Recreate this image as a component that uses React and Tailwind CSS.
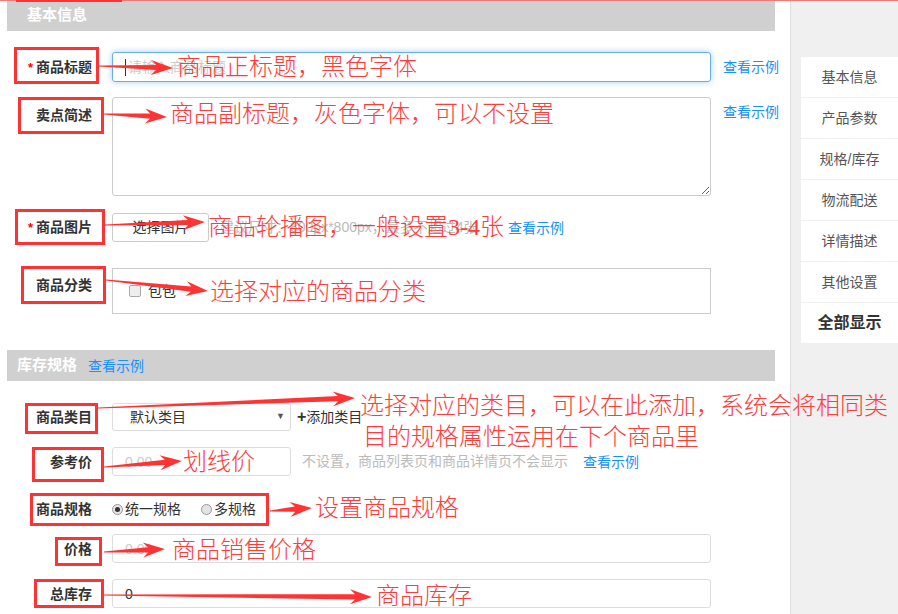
import React from 'react';

// 红框标注
const marks = [
  { l: 14, t: 47, w: 85, h: 37 },
  { l: 18, t: 97, w: 86, h: 37 },
  { l: 15, t: 209, w: 90, h: 36 },
  { l: 21, t: 266, w: 85, h: 38 },
  { l: 25, t: 403, w: 73, h: 31 },
  { l: 32, t: 447, w: 72, h: 35 },
  { l: 30, t: 493, w: 239, h: 33 },
  { l: 55, t: 537, w: 47, h: 29 },
  { l: 34, t: 579, w: 70, h: 29 },
];

const arrows = [
  [99, 66, 173, 68],
  [104, 114, 167, 117],
  [105, 225, 205, 222],
  [106, 280, 208, 291],
  [98, 408, 355, 398],
  [104, 467, 182, 461],
  [270, 511, 312, 508],
  [104, 552, 165, 549],
  [104, 595, 372, 597],
];

const notes = [
  { x: 177, y: 67, text: '商品正标题，黑色字体' },
  { x: 170, y: 114, text: '商品副标题，灰色字体，可以不设置' },
  { x: 208, y: 227, text: '商品轮播图，一般设置3-4张' },
  { x: 210, y: 292, text: '选择对应的商品分类' },
  { x: 360, y: 406, text: '选择对应的类目，可以在此添加，系统会将相同类' },
  { x: 363, y: 437, text: '目的规格属性运用在下个商品里' },
  { x: 183, y: 462, text: '划线价' },
  { x: 315, y: 508, text: '设置商品规格' },
  { x: 172, y: 550, text: '商品销售价格' },
  { x: 376, y: 596, text: '商品库存' },
];

const navItems = ['基本信息', '产品参数', '规格/库存', '物流配送', '详情描述', '其他设置'];

const arrowPoints = ([x1, y1, x2, y2]) => {
  const dx = x2 - x1;
  const dy = y2 - y1;
  const len = Math.hypot(dx, dy);
  const ux = dx / len;
  const uy = dy / len;
  const nx = -uy;
  const ny = ux;
  const head = 20;
  const bx = x2 - ux * head;
  const by = y2 - uy * head;
  const pt = (x, y) => `${x.toFixed(1)},${y.toFixed(1)}`;
  return [
    pt(x1 + nx * 0.6, y1 + ny * 0.6),
    pt(bx + ux * 3 + nx * 2.6, by + uy * 3 + ny * 2.6),
    pt(bx - ux * 2 + nx * 7.5, by - uy * 2 + ny * 7.5),
    pt(x2, y2),
    pt(bx - ux * 2 - nx * 7.5, by - uy * 2 - ny * 7.5),
    pt(bx + ux * 3 - nx * 2.6, by + uy * 3 - ny * 2.6),
    pt(x1 - nx * 0.6, y1 - ny * 0.6),
  ].join(' ');
};

const Label = ({ star, children, className = '' }) => (
  <div className={`w-[105px] shrink-0 pr-[20px] text-right text-[14px] leading-[20px] font-bold text-[#333] ${className}`}>
    {star && <span className="mr-[3px] text-[13px] text-[#f00]">*</span>}
    {children}
  </div>
);

const Example = ({ className = '' }) => (
  <span className={`text-[14px] leading-[20px] text-[#1890ff] ${className}`}>查看示例</span>
);

const Radio = ({ checked }) => (
  <span className="flex h-[11px] w-[11px] items-center justify-center rounded-full border border-[#999] bg-[#e4e4e4]">
    {checked && <span className="h-[5px] w-[5px] rounded-full bg-[#333]" />}
  </span>
);

export default function App() {
  return (
    <div className="relative flex h-[614px] w-[898px] overflow-hidden bg-white [font-family:'Liberation_Sans','Noto_Sans_CJK_SC',sans-serif]">
      {/* 主表单 */}
      <div className="w-[790px] shrink-0 pl-[7px]">
        <div className="flex h-[31px] w-[768px] items-center bg-[#d0d0d0] pl-[20px] text-[15px] font-bold text-white">
          基本信息
        </div>

        <div className="mt-[21px] flex items-center">
          <Label star>商品标题</Label>
          <div className="flex h-[30px] w-[599px] items-center rounded-[3px] border border-[#66afe9] pl-[12px] shadow-[0_0_6px_rgba(102,175,233,0.6)]">
            <span className="h-[17px] w-px bg-[#333]" />
            <span className="ml-[2px] text-[14px] text-[#ccc]">请输入商品标题</span>
          </div>
          <Example className="ml-[12px]" />
        </div>

        <div className="mt-[15px] flex items-start">
          <Label className="pt-[8px]">卖点简述</Label>
          <textarea
            readOnly
            className="h-[99px] w-[599px] rounded-[3px] border border-[#ccc] outline-none"
          />
          <Example className="ml-[12px] mt-[5px]" />
        </div>

        <div className="mt-[17px] flex items-center">
          <Label star>商品图片</Label>
          <button className="h-[29px] w-[97px] rounded-[3px] border border-[#ccc] bg-white text-[14px] text-[#333]">
            选择图片
          </button>
          <span className="ml-[11px] w-[285px] whitespace-nowrap text-[14px] text-[#bbb]">
            建议尺寸：800px*800px，最多不超过4张
          </span>
          <Example className="ml-[3px]" />
        </div>

        <div className="mt-[26px] flex items-start">
          <Label className="pt-[7px]">商品分类</Label>
          <div className="flex h-[46px] w-[599px] items-center border border-[#ccc] pl-[16px]">
            <span className="h-[12px] w-[12px] rounded-[2px] border border-[#aaa] bg-[#eee]" />
            <span className="ml-[7px] text-[14px] text-[#333]">包包</span>
          </div>
        </div>

        <div className="mt-[36px] flex h-[31px] w-[768px] items-center bg-[#d0d0d0] pl-[10px]">
          <span className="text-[15px] font-bold text-white">库存规格</span>
          <Example className="ml-[11px]" />
        </div>

        <div className="mt-[22px] flex items-center">
          <Label>商品类目</Label>
          <div className="flex h-[28px] w-[179px] items-center justify-between rounded-[3px] border border-[#ddd] pl-[17px] pr-[5px]">
            <span className="text-[14px] text-[#333]">默认类目</span>
            <span className="text-[9px] text-[#555]">▼</span>
          </div>
          <span className="ml-[6px] text-[14px] text-[#333]">
            <b className="text-[16px]">+</b>添加类目
          </span>
        </div>

        <div className="mt-[16px] flex items-center">
          <Label>参考价</Label>
          <input
            readOnly
            placeholder="0.00"
            className="h-[29px] w-[179px] rounded-[3px] border border-[#ddd] pl-[12px] text-[14px] outline-none placeholder:text-[#ccc]"
          />
          <span className="ml-[11px] text-[14px] text-[#bbb]">不设置，商品列表页和商品详情页不会显示</span>
          <Example className="ml-[15px]" />
        </div>

        <div className="mt-[19px] flex h-[28px] items-center">
          <Label>商品规格</Label>
          <Radio checked />
          <span className="ml-[2px] text-[14px] text-[#333]">统一规格</span>
          <span className="ml-[20px]" />
          <Radio />
          <span className="ml-[2px] text-[14px] text-[#333]">多规格</span>
        </div>

        <div className="mt-[11px] flex items-center">
          <Label>价格</Label>
          <input
            readOnly
            placeholder="0.00"
            className="h-[29px] w-[599px] rounded-[3px] border border-[#ddd] pl-[12px] text-[14px] outline-none placeholder:text-[#ccc]"
          />
        </div>

        <div className="mt-[16px] flex items-center">
          <Label>总库存</Label>
          <input
            readOnly
            value="0"
            className="h-[29px] w-[599px] rounded-[3px] border border-[#ddd] pl-[12px] text-[14px] text-[#333] outline-none"
          />
        </div>
      </div>

      {/* 右侧导航 */}
      <div className="flex-1 border-l border-[#ddd] bg-[#f0f0f0] pl-[10px] pt-[57px]">
        <div className="flex flex-col gap-px">
          {navItems.map((item) => (
            <div key={item} className="flex h-[40px] items-center justify-center bg-white text-[14px] text-[#555]">
              {item}
            </div>
          ))}
          <div className="flex h-[40px] items-center justify-center bg-white text-[16px] font-bold text-[#333]">
            全部显示
          </div>
        </div>
      </div>

      {/* 顶部红线 */}
      <div className="absolute left-0 top-0 h-px w-full bg-[#f07a7a]" />
      <div className="absolute left-[16px] top-0 h-[2px] w-[106px] bg-[#f33]" />

      {/* 标注层 */}
      <div className="pointer-events-none absolute inset-0">
        {marks.map((m, i) => (
          <div
            key={i}
            className="absolute border-[3px] border-[#ff3333]"
            style={{ left: m.l, top: m.t, width: m.w, height: m.h }}
          />
        ))}
        <svg className="absolute left-0 top-0" width="898" height="614" viewBox="0 0 898 614">
          {arrows.map((a, i) => (
            <polygon key={i} points={arrowPoints(a)} fill="#ff3333" />
          ))}
        </svg>
        {notes.map((n) => (
          <div
            key={n.text}
            className="absolute whitespace-nowrap text-[24px] leading-[24px] font-light text-[#ff3c3c] [font-family:'Liberation_Serif','Noto_Sans_CJK_SC',serif]"
            style={{ left: n.x, top: n.y - 12 }}
          >
            {n.text}
          </div>
        ))}
      </div>
    </div>
  );
}
